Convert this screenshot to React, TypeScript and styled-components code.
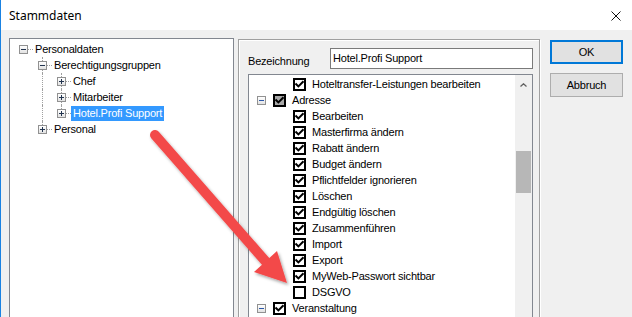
import React from "react";
import styled, { createGlobalStyle } from "styled-components";

const GlobalStyle = createGlobalStyle`
  html, body {
    margin: 0;
    padding: 0;
    background: #fff;
  }
  body {
    font-family: "Liberation Sans", Arial, sans-serif;
    font-size: 11px;
    letter-spacing: -0.2px;
    color: #000;
  }
`;

const Window = styled.div`
  position: relative;
  width: 632px;
  height: 317px;
  overflow: hidden;
  box-sizing: border-box;
  border-left: 1px solid #1a82e2;
  display: flex;
  flex-direction: column;
  background: #f0f0f0;
`;

const TitleBar = styled.div`
  height: 30px;
  flex: none;
  box-sizing: border-box;
  padding: 1px 11px 0 8px;
  display: flex;
  align-items: center;
  justify-content: space-between;
  background: #fff;
  font-family: "Noto Sans", "Open Sans", sans-serif;
  font-size: 12px;
  letter-spacing: 0;
`;

const Body = styled.div`
  flex: 1;
  min-height: 0;
  display: flex;
  align-items: flex-start;
  padding: 8px 0 0 8px;
`;

/* ---------- tree ---------- */

const TreePanel = styled.div`
  width: 225px;
  height: 300px;
  flex: none;
  box-sizing: border-box;
  border: 1px solid #828790;
  background: #fff;
  padding: 2px 0 0 9px;
`;

const TreeRow = styled.div`
  height: 16px;
  display: flex;
  align-items: stretch;
`;

const Guide = styled.div`
  width: 19px;
  flex: none;
  display: flex;
`;

const Stem = styled.div<{ $span: "full" | "top" | "none" }>`
  grid-area: 1 / 1;
  align-self: start;
  margin-left: 4px;
  width: 0;
  height: ${(p) => (p.$span === "full" ? "16px" : p.$span === "top" ? "8px" : "0")};
  border-left: ${(p) => (p.$span === "none" ? "none" : "1px dotted #a0a0a0")};
`;

const Joint = styled.div`
  width: 14px;
  flex: none;
  display: grid;
  grid-template: 16px / 14px;
`;

const Branch = styled.div`
  grid-area: 1 / 1;
  align-self: center;
  margin-left: 9px;
  height: 0;
  border-top: 1px dotted #a0a0a0;
`;

const ExpanderBox = styled.span`
  width: 9px;
  height: 9px;
  flex: none;
  box-sizing: border-box;
  border: 1px solid #919191;
  background: linear-gradient(#ffffff, #e2e2e2);
  display: flex;
`;

const JointExpander = styled(ExpanderBox)`
  grid-area: 1 / 1;
  align-self: center;
  justify-self: start;
`;

const NodeLabel = styled.span<{ $selected?: boolean }>`
  align-self: center;
  height: 15px;
  line-height: 15px;
  padding: 0 2px;
  white-space: nowrap;
  background: ${(p) => (p.$selected ? "#3399ff" : "transparent")};
  color: ${(p) => (p.$selected ? "#fff" : "#000")};
`;

/* ---------- group box ---------- */

const GroupBox = styled.div`
  width: 302px;
  height: 300px;
  flex: none;
  box-sizing: border-box;
  margin: 1px 0 0 4px;
  padding: 8px 6px 0 9px;
  border: 1px solid #a0a0a0;
  box-shadow: inset 1px 1px 0 #fff, 1px 1px 0 #fff;
  display: flex;
  flex-direction: column;
`;

const FieldRow = styled.div`
  display: flex;
  align-items: flex-start;
`;

const FieldLabel = styled.span`
  width: 82px;
  flex: none;
  padding-top: 7px;
`;

const TextBox = styled.div`
  flex: 1;
  height: 21px;
  box-sizing: border-box;
  border: 1px solid #7a7a7a;
  background: #fff;
  padding: 3px 0 0 2px;
  white-space: nowrap;
`;

const ListBox = styled.div`
  margin-top: 5px;
  flex: 1;
  display: flex;
  border: 1px solid #828790;
  background: #fff;
`;

const Rows = styled.div`
  flex: 1;
  padding: 1px 0 0 8px;
`;

const PermRow = styled.div<{ $level: number }>`
  height: 16px;
  display: flex;
  align-items: center;
  padding-left: ${(p) => p.$level * 20}px;
  white-space: nowrap;
`;

const ExpanderSlot = styled.div`
  width: 16px;
  flex: none;
  display: flex;
  align-items: center;
`;

const CheckBox = styled.span<{ $shade?: boolean }>`
  width: 13px;
  height: 13px;
  flex: none;
  box-sizing: border-box;
  margin-right: 6px;
  border: 2px solid #000;
  background: ${(p) => (p.$shade ? "#a8a8a8" : "#fff")};
  display: flex;
`;

const ScrollBar = styled.div`
  width: 17px;
  flex: none;
  background: #f0f0f0;
  display: flex;
  flex-direction: column;
  align-items: center;
`;

const ScrollArrow = styled.div`
  height: 17px;
  width: 17px;
  display: flex;
  align-items: center;
  justify-content: center;
  padding-top: 2px;
  box-sizing: border-box;
`;

const ScrollThumb = styled.div`
  margin-top: 59px;
  width: 15px;
  height: 42px;
  background: #b7b7b7;
`;

/* ---------- buttons ---------- */

const ButtonColumn = styled.div`
  margin: 2px 0 0 10px;
  display: flex;
  flex-direction: column;
  gap: 9px;
`;

const DialogButton = styled.button<{ $default?: boolean }>`
  width: 73px;
  height: 24px;
  box-sizing: border-box;
  padding: 0;
  margin: 0;
  font-family: "Liberation Sans", Arial, sans-serif;
  font-size: 11px;
  letter-spacing: -0.2px;
  color: #000;
  background: #e1e1e1;
  border: ${(p) => (p.$default ? "2px solid #0078d7" : "1px solid #adadad")};
`;

const ArrowLayer = styled.svg`
  position: absolute;
  left: -1px;
  top: 0;
  pointer-events: none;
`;

/* ---------- data ---------- */

type Span = "full" | "top" | "none";

const treeNodes: { label: string; guides: boolean[]; stem: Span; open: boolean; selected?: boolean }[] = [
  { label: "Personaldaten", guides: [], stem: "none", open: true },
  { label: "Berechtigungsgruppen", guides: [false], stem: "full", open: true },
  { label: "Chef", guides: [false, true], stem: "full", open: false },
  { label: "Mitarbeiter", guides: [false, true], stem: "full", open: false },
  { label: "Hotel.Profi Support", guides: [false, true], stem: "top", open: false, selected: true },
  { label: "Personal", guides: [false], stem: "top", open: false },
];

const permissions: { label: string; level: number; checked: boolean; group?: boolean; shade?: boolean }[] = [
  { label: "Hoteltransfer-Leistungen bearbeiten", level: 1, checked: true },
  { label: "Adresse", level: 0, checked: true, group: true, shade: true },
  { label: "Bearbeiten", level: 1, checked: true },
  { label: "Masterfirma ändern", level: 1, checked: true },
  { label: "Rabatt ändern", level: 1, checked: true },
  { label: "Budget ändern", level: 1, checked: true },
  { label: "Pflichtfelder ignorieren", level: 1, checked: true },
  { label: "Löschen", level: 1, checked: true },
  { label: "Endgültig löschen", level: 1, checked: true },
  { label: "Zusammenführen", level: 1, checked: true },
  { label: "Import", level: 1, checked: true },
  { label: "Export", level: 1, checked: true },
  { label: "MyWeb-Passwort sichtbar", level: 1, checked: true },
  { label: "DSGVO", level: 1, checked: false },
  { label: "Veranstaltung", level: 0, checked: true, group: true },
];

function Sign({ open, color }: { open: boolean; color: string }) {
  return (
    <svg width="7" height="7" viewBox="0 0 7 7" shapeRendering="crispEdges">
      <path d="M1 3.5H6" stroke={color} strokeWidth="1" />
      {!open && <path d="M3.5 1V6" stroke={color} strokeWidth="1" />}
    </svg>
  );
}

function Tick() {
  return (
    <svg width="9" height="9" viewBox="0 0 9 9">
      <path d="M1.2 4.2L3.4 6.4L7.8 2" fill="none" stroke="#000" strokeWidth="2" strokeLinecap="square" />
    </svg>
  );
}

export default function App() {
  return (
    <>
      <GlobalStyle />
      <Window>
        <TitleBar>
          <span>Stammdaten</span>
          <svg width="10" height="10" viewBox="0 0 10 10">
            <path d="M0.5 0.5L9.5 9.5M9.5 0.5L0.5 9.5" stroke="#111" strokeWidth="1" />
          </svg>
        </TitleBar>
        <Body>
          <TreePanel>
            {treeNodes.map((node) => (
              <TreeRow key={node.label}>
                {node.guides.map((on, i) => (
                  <Guide key={i}>
                    <Stem $span={on ? "full" : "none"} />
                  </Guide>
                ))}
                <Joint>
                  <Stem $span={node.stem} />
                  <Branch />
                  <JointExpander>
                    <Sign open={node.open} color="#22344f" />
                  </JointExpander>
                </Joint>
                <NodeLabel $selected={node.selected}>{node.label}</NodeLabel>
              </TreeRow>
            ))}
          </TreePanel>

          <GroupBox>
            <FieldRow>
              <FieldLabel>Bezeichnung</FieldLabel>
              <TextBox>Hotel.Profi Support</TextBox>
            </FieldRow>
            <ListBox>
              <Rows>
                {permissions.map((p) => (
                  <PermRow key={p.label} $level={p.level}>
                    <ExpanderSlot>
                      {p.group && (
                        <ExpanderBox>
                          <Sign open color="#2c58a8" />
                        </ExpanderBox>
                      )}
                    </ExpanderSlot>
                    <CheckBox $shade={p.shade}>{p.checked && <Tick />}</CheckBox>
                    <span>{p.label}</span>
                  </PermRow>
                ))}
              </Rows>
              <ScrollBar>
                <ScrollArrow>
                  <svg width="7" height="4" viewBox="0 0 7 4">
                    <path d="M0.5 3.5L3.5 0.8L6.5 3.5" fill="none" stroke="#606060" strokeWidth="1.3" />
                  </svg>
                </ScrollArrow>
                <ScrollThumb />
              </ScrollBar>
            </ListBox>
          </GroupBox>

          <ButtonColumn>
            <DialogButton $default>OK</DialogButton>
            <DialogButton>Abbruch</DialogButton>
          </ButtonColumn>
        </Body>

        <ArrowLayer width="632" height="317" viewBox="0 0 632 317">
          <defs>
            <filter id="arrowShadow" x="-20%" y="-20%" width="140%" height="140%">
              <feDropShadow dx="1.5" dy="2" stdDeviation="1.8" floodColor="#000" floodOpacity="0.35" />
            </filter>
          </defs>
          <g filter="url(#arrowShadow)" fill="#f34a4a" stroke="none">
            <path d="M155 135L267 263" stroke="#f34a4a" strokeWidth="10" strokeLinecap="round" />
            <polygon points="287,283 254,272 277,251" />
          </g>
        </ArrowLayer>
      </Window>
    </>
  );
}
